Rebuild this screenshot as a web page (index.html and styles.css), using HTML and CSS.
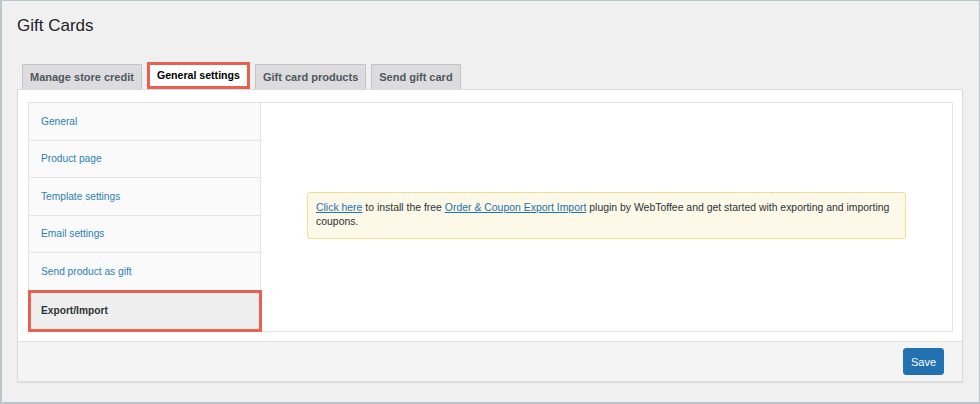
FILE: index.html
```html
<!DOCTYPE html>
<html lang="en">
<head>
    <meta charset="UTF-8">
    <title>Gift Cards</title>
    <link rel="stylesheet" href="styles.css">
</head>
<body>
    <div class="frame">
        <h1 class="page-title">Gift Cards</h1>
        <div class="tabs">
            <a class="tab">Manage store credit</a>
            <a class="tab active">General settings</a>
            <a class="tab">Gift card products</a>
            <a class="tab">Send gift card</a>
        </div>
        <div class="panel">
            <div class="panel-body">
                <div class="settings">
                    <ul class="side-nav">
                        <li><a>General</a></li>
                        <li><a>Product page</a></li>
                        <li><a>Template settings</a></li>
                        <li><a>Email settings</a></li>
                        <li><a>Send product as gift</a></li>
                        <li class="current"><a>Export/Import</a></li>
                    </ul>
                    <div class="content">
                        <div class="notice">
                            <a href="#">Click here</a> to install the free <a href="#">Order &amp; Coupon Export Import</a> plugin by WebToffee and get started with exporting and importing coupons.
                        </div>
                    </div>
                </div>
            </div>
            <div class="panel-footer">
                <button class="btn-save">Save</button>
            </div>
        </div>
    </div>
</body>
</html>
```

FILE: styles.css
```css
html, body {
    margin: 0;
    padding: 0;
}
body {
    font-family: "Liberation Sans", Arial, sans-serif;
    background: #f0f0f1;
    color: #3c434a;
}
.frame {
    height: 404px;
    box-sizing: border-box;
    border: 1px solid #b9c6cc;
    border-left-width: 2px;
    border-bottom-width: 2px;
    padding: 14px 16px 0 15px;
}
.page-title {
    margin: 0;
    font-size: 17px;
    line-height: 22px;
    font-weight: 400;
    color: #1d2327;
}
.tabs {
    display: flex;
    align-items: flex-end;
    gap: 5px;
    margin-top: 25px;
    padding-left: 5px;
    height: 27px;
}
.tab {
    display: block;
    height: 25px;
    box-sizing: border-box;
    padding: 0 7px;
    line-height: 24px;
    font-size: 11px;
    font-weight: 700;
    color: #50575e;
    background: #dcdcde;
    border: 1px solid #c3c4c7;
    border-bottom: none;
}
.tab.active {
    width: 103px;
    height: 27px;
    line-height: 21px;
    padding: 0;
    text-align: center;
    font-size: 10.6px;
    background: #fff;
    color: #000;
    border: 3px solid #e8604f;
}
.panel {
    background: #fff;
    border: 1px solid #dcdcde;
    box-shadow: 0 1px 1px rgba(0, 0, 0, 0.08);
}
.panel-body {
    padding: 12px 9px 9px 10px;
}
.settings {
    display: flex;
    box-sizing: border-box;
    border: 1px solid #e4e4e4;
    height: 230px;
}
.side-nav {
    list-style: none;
    margin: 0;
    padding: 0;
    width: 231px;
    background: #fafafa;
    border-right: 1px solid #e4e4e4;
    display: flex;
    flex-direction: column;
}
.side-nav li {
    flex: 1;
    display: flex;
    align-items: center;
    padding-left: 12px;
    border-bottom: 1px solid #e4e4e4;
    font-size: 10.2px;
}
.side-nav li:last-child {
    border-bottom: none;
}
.side-nav a {
    color: #2c80b6;
}
.side-nav li.current {
    background: #eeeeee;
    border: 3px solid #e8604f;
    margin: -1px -2px -1px -1px;
    padding-left: 10px;
}
.side-nav li.current a {
    color: #2c3338;
    font-weight: 700;
}
.content {
    flex: 1;
    display: flex;
    align-items: center;
    justify-content: center;
    padding-bottom: 4px;
}
.notice {
    width: 599px;
    box-sizing: border-box;
    padding: 8px 8px 9px;
    background: #fcf9e8;
    border: 1px solid #f0dd92;
    border-radius: 3px;
    font-size: 10.45px;
    line-height: 14px;
    color: #2c3338;
}
.notice a {
    color: #2271b1;
    text-decoration: underline;
}
.panel-footer {
    display: flex;
    justify-content: flex-end;
    padding: 6px 18px 6px 0;
    background: #f4f4f4;
    border-top: 1px solid #e2e2e2;
}
.btn-save {
    height: 27px;
    padding: 0 7px;
    font-family: inherit;
    font-size: 11px;
    color: #fff;
    background: #2271b1;
    border: 1px solid #2271b1;
    border-radius: 3px;
}
```
